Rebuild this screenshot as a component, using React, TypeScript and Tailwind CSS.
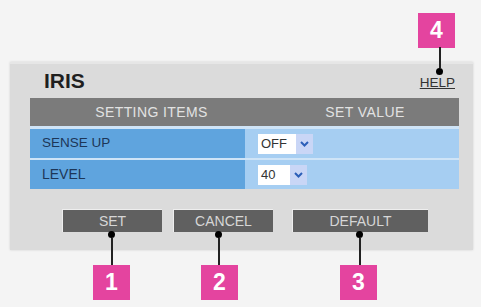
import React from 'react';

const Tag = ({ n }: { n: string }) => (
  <div className="w-[37px] h-[35px] bg-[#e4449f] flex items-center justify-center text-white font-bold text-[23px] leading-none">
    {n}
  </div>
);

// vertical leader line ending in a dot
const Leader = ({ className, dotTop }: { className: string; dotTop: boolean }) => (
  <div className={`absolute w-[7px] flex flex-col items-center ${className}`}>
    {dotTop && <div className="w-[7px] h-[7px] rounded-full bg-black shrink-0" />}
    <div className="w-[2px] flex-1 bg-[#222]" />
    {!dotTop && <div className="w-[7px] h-[7px] rounded-full bg-black shrink-0" />}
  </div>
);

const Select = ({ value, w }: { value: string; w: string }) => (
  <div className="flex h-[20px] text-[13px] text-[#333]">
    <div className={`bg-white flex items-center pl-[3px] ${w}`}>{value}</div>
    <div className="w-[17px] bg-[#c9d6f6] flex items-center justify-center">
      <svg width="9" height="6" viewBox="0 0 9 6">
        <path d="M1 1 L4.5 4.5 L8 1" fill="none" stroke="#2c5fb8" strokeWidth="2" />
      </svg>
    </div>
  </div>
);

const Btn = ({ label, w }: { label: string; w: string }) => (
  <div
    className={`h-[23px] bg-[#606060] border-t border-l border-[#eeeeee] flex items-center justify-center text-[14px] text-[#d6d6d6] ${w}`}
  >
    {label}
  </div>
);

export default function App() {
  return (
    <div className="relative w-[481px] h-[307px] bg-[#f4f4f4] font-['Liberation_Sans',Arial,sans-serif] overflow-hidden">
      <div className="h-[62px] pt-[13px] pl-[418px]">
        <Tag n="4" />
      </div>

      <div className="ml-[10px] w-[463px] h-[188px] bg-[#dbdbdb] border-t-2 border-[#e6e6e6] shadow-[0_0_2px_#cfcfcf]">
        <div className="flex items-end justify-between h-[27px] pl-[34px] pr-[18px]">
          <span className="text-[21px] font-bold text-[#1f1f1f] leading-none">IRIS</span>
          <span className="text-[13.5px] text-[#333] underline leading-none mb-[2px]">HELP</span>
        </div>

        <div className="ml-[20px] mt-[7px] w-[429px] flex flex-col">
          <div className="h-[28px] bg-[#7b7b7b] grid grid-cols-[215px_1fr] text-[14px] text-[#e2e2e2] items-center">
            <span className="pl-[28px] text-center tracking-[0.4px]">SETTING ITEMS</span>
            <span className="pl-[26px] text-center tracking-[0.4px]">SET VALUE</span>
          </div>
          <div className="h-[3px] bg-[#cfe4f7]" />
          <div className="h-[29px] grid grid-cols-[215px_1fr]">
            <div className="bg-[#5fa4de] flex items-center pl-[12px] text-[13.5px] text-[#1d3657]">SENSE UP</div>
            <div className="bg-[#a6cef2] flex items-center pl-[13px]">
              <Select value="OFF" w="w-[38px]" />
            </div>
          </div>
          <div className="h-[2px] bg-[#cfe4f7]" />
          <div className="h-[29px] grid grid-cols-[215px_1fr]">
            <div className="bg-[#5fa4de] flex items-center pl-[12px] text-[14px] text-[#1d3657]">LEVEL</div>
            <div className="bg-[#a6cef2] flex items-center pl-[13px]">
              <Select value="40" w="w-[32px]" />
            </div>
          </div>
        </div>

        <div className="flex mt-[20px] pl-[52px]">
          <Btn label="SET" w="w-[100px]" />
          <div className="w-[11px]" />
          <Btn label="CANCEL" w="w-[100px]" />
          <div className="w-[19px]" />
          <Btn label="DEFAULT" w="w-[136px]" />
        </div>
      </div>

      <div className="flex pt-[15px] pl-[93px]">
        <Tag n="1" />
        <div className="w-[71px]" />
        <Tag n="2" />
        <div className="w-[102px]" />
        <Tag n="3" />
      </div>

      <Leader className="left-[436px] top-[47px] h-[28px]" dotTop={false} />
      <Leader className="left-[108px] top-[231px] h-[34px]" dotTop />
      <Leader className="left-[215px] top-[231px] h-[34px]" dotTop />
      <Leader className="left-[356px] top-[231px] h-[34px]" dotTop />
    </div>
  );
}
